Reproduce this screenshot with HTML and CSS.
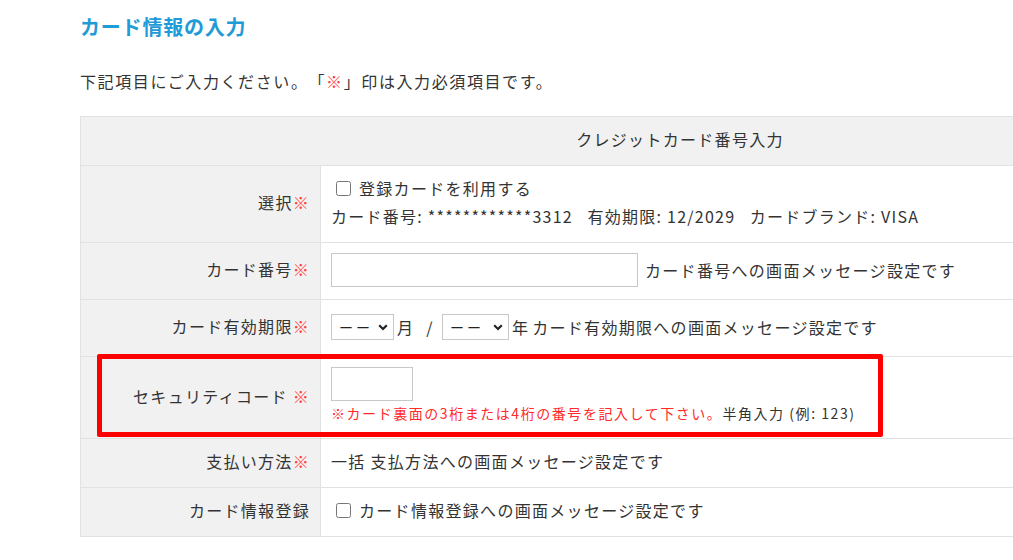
FILE: index.html
```html
<!DOCTYPE html>
<html lang="ja">
<head>
<meta charset="utf-8">
<title>カード情報の入力</title>
<link rel="stylesheet" href="styles.css">
</head>
<body>
<div class="page">
  <h2 class="title">カード情報の入力</h2>
  <p class="intro">下記項目にご入力ください。「<span class="req">※</span>」印は入力必須項目です。</p>
  <table class="form">
    <tr class="r-head">
      <th colspan="2">クレジットカード番号入力</th>
    </tr>
    <tr class="r-select">
      <th>選択<span class="req">※</span></th>
      <td>
        <label class="check-line"><input type="checkbox" class="cb"> 登録カードを利用する</label>
        <div class="card-info">カード番号: ************3312&nbsp;&nbsp; 有効期限: 12/2029&nbsp;&nbsp; カードブランド: VISA</div>
      </td>
    </tr>
    <tr class="r-num">
      <th>カード番号<span class="req">※</span></th>
      <td><div class="line"><input type="text" class="txt txt-num"><span>カード番号への画面メッセージ設定です</span></div></td>
    </tr>
    <tr class="r-exp">
      <th>カード有効期限<span class="req">※</span></th>
      <td>
        <div class="line">
          <span class="sel-wrap sel-m"><select class="sel"><option>ーー</option></select><svg class="chev" viewBox="0 0 10 7" width="10" height="7"><path d="M1.2 1.2 L5 5 L8.8 1.2" fill="none" stroke="#222" stroke-width="2.2"/></svg></span>
          <span class="unit">月</span><span class="slash">/</span>
          <span class="sel-wrap sel-y"><select class="sel"><option>ーー</option></select><svg class="chev" viewBox="0 0 10 7" width="10" height="7"><path d="M1.2 1.2 L5 5 L8.8 1.2" fill="none" stroke="#222" stroke-width="2.2"/></svg></span>
          <span class="unit">年</span><span>カード有効期限への画面メッセージ設定です</span>
        </div>
      </td>
    </tr>
    <tr class="r-sec">
      <th>セキュリティコード <span class="req">※</span></th>
      <td>
        <input type="text" class="txt txt-sec">
        <div class="note"><span class="note-red">※カード裏面の3桁または4桁の番号を記入して下さい。</span>半角入力 (例: 123)</div>
      </td>
    </tr>
    <tr class="r-pay">
      <th>支払い方法<span class="req">※</span></th>
      <td>一括 支払方法への画面メッセージ設定です</td>
    </tr>
    <tr class="r-reg">
      <th>カード情報登録</th>
      <td><label class="check-line"><input type="checkbox" class="cb"> カード情報登録への画面メッセージ設定です</label></td>
    </tr>
  </table>
  <div class="highlight"></div>
</div>
</body>
</html>
```

FILE: styles.css
```css
html, body {
  margin: 0;
  padding: 0;
  background: #fff;
  overflow: hidden;
}
body {
  font-family: "Noto Sans CJK JP", "Noto Sans", sans-serif;
  color: #333;
  font-size: 16px;
  letter-spacing: 1.3px;
  text-spacing-trim: space-all;
}
.page {
  position: relative;
  padding: 12px 0 0 80px;
  width: 1200px;
}
.title {
  margin: 0;
  font-size: 20px;
  line-height: 30px;
  font-weight: bold;
  color: #1f9bd7;
  letter-spacing: 0.8px;
}
.intro {
  margin: 24px 0 0;
  line-height: 30px;
  letter-spacing: 1.6px;
}
.req {
  color: #ff3c3c;
}
.form {
  margin-top: 20px;
  border-collapse: collapse;
  width: 1200px;
}
.form th, .form td {
  border: 1px solid #e2e2e2;
  padding: 0 10px 4px;
  vertical-align: middle;
}
.form th {
  background: #f1f1f1;
  font-weight: normal;
  text-align: right;
  width: 219px;
}
.r-head th {
  text-align: center;
  height: 44px;
}
.r-select td, .r-select th { height: 72px; }
.r-num td, .r-num th { height: 52px; }
.r-exp td, .r-exp th { height: 52px; }
.r-sec td, .r-sec th { height: 77px; }
.r-pay td, .r-pay th { height: 44px; }
.r-reg td, .r-reg th { height: 44px; }
.r-num td, .r-exp td { padding-bottom: 2px; height: 54px; }
.check-line {
  display: flex;
  align-items: center;
  line-height: 28px;
}
.cb {
  width: 15px;
  height: 15px;
  margin: 0 8px 0 5px;
}
.card-info {
  line-height: 28px;
  letter-spacing: 1.25px;
}
.line {
  display: flex;
  align-items: center;
}
.txt {
  box-sizing: border-box;
  border: 1px solid #c8c8c8;
  background: #fff;
  height: 34px;
  margin: 0;
  padding: 0 6px;
}
.txt-num {
  width: 307px;
  margin-right: 7px;
}
.txt-sec {
  display: block;
  width: 82px;
  margin-top: 0;
}
.sel-wrap {
  position: relative;
  display: inline-block;
  height: 26px;
}
.sel {
  appearance: none;
  -webkit-appearance: none;
  box-sizing: border-box;
  height: 26px;
  border: 1px solid #c8c8c8;
  border-radius: 0;
  background: #fff;
  font-family: inherit;
  font-size: 14px;
  color: #222;
  padding: 0 0 0 7px;
  letter-spacing: 3px;
  margin: 0;
  display: block;
}
.sel-m .sel { width: 63px; }
.sel-y .sel { width: 67px; }
.chev {
  position: absolute;
  right: 6px;
  top: 10px;
  pointer-events: none;
}
.unit {
  margin: 0 3px;
}
.slash {
  margin: 0 8px 0 9px;
}
.note {
  font-size: 14px;
  letter-spacing: 1.55px;
  line-height: 22px;
  margin-top: 1px;
}
.note-red {
  color: #ff2a2a;
}
.highlight {
  position: absolute;
  left: 97px;
  top: 354px;
  width: 786px;
  height: 83px;
  box-sizing: border-box;
  border: 5px solid #ff0000;
  border-radius: 2px;
  pointer-events: none;
}
```
